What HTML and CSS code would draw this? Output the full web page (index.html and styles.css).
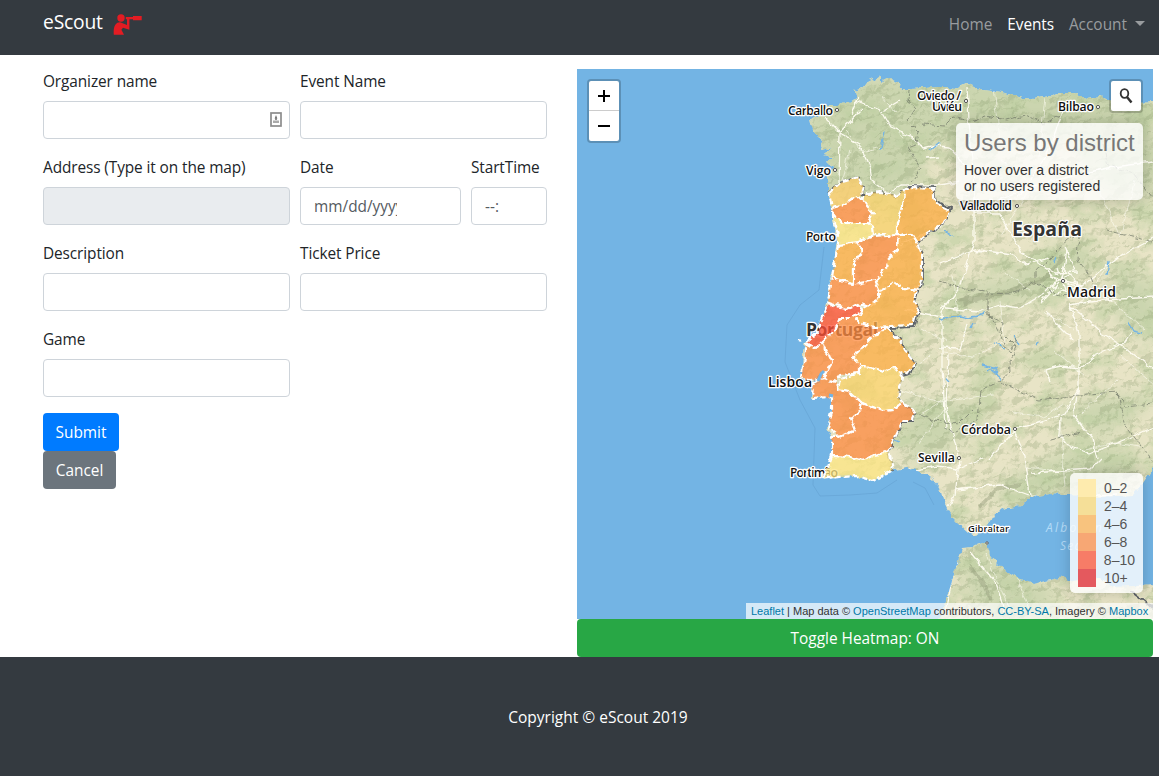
FILE: index.html
```html
<!DOCTYPE html>
<html lang="en">
<head>
<meta charset="utf-8">
<title>eScout</title>
<link rel="stylesheet" href="styles.css">
</head>
<body>
<header class="navbar">
  <a class="brand"><span>eScout</span>
    <svg class="logo" width="32" height="24" viewBox="0 0 32 24"><circle cx="9" cy="5" r="3.7"/><path d="M21 3h8.700v4.200H21V6.200h-3.600V16.800L11 14.700l-1.600 2.100 2.600 5H1.800C1.400 16 2 12 5.400 9.800Q8 8.400 10 10l5 2V6.200h-1.200V4H21z"/></svg>
  </a>
  <nav class="menu"><a>Home</a><a class="active">Events</a><a class="dropdown">Account</a></nav>
</header>
<main class="content">
  <form class="form">
    <div class="row">
      <div class="group"><label>Organizer name</label><div class="input fill">
        <svg width="12" height="15" viewBox="0 0 12 15"><rect x="1" y="1" width="10" height="13" fill="#fff" stroke="#8c8c8c" stroke-width="1.700"/><path d="M6 3l1.400 3.500H4.600zM5.200 6h1.600v2H5.200z" fill="#777"/><path d="M3 8.500h6V11H3z" fill="#aaa"/></svg></div></div>
      <div class="group"><label>Event Name</label><div class="input"></div></div>
    </div>
    <div class="row">
      <div class="group"><label>Address (Type it on the map)</label><div class="input disabled"></div></div>
      <div class="group date"><label>Date</label><div class="input"><span class="clip">mm/dd/yyyy</span></div></div>
      <div class="group time"><label>StartTime</label><div class="input"><span>--:</span></div></div>
    </div>
    <div class="row">
      <div class="group"><label>Description</label><div class="input"></div></div>
      <div class="group"><label>Ticket Price</label><div class="input"></div></div>
    </div>
    <div class="row"><div class="group"><label>Game</label><div class="input"></div></div></div>
    <button type="button" class="btn submit">Submit</button>
    <button type="button" class="btn cancel">Cancel</button>
  </form>
  <section class="map-column">
    <div class="map">
      <svg class="tiles" width="576" height="550" viewBox="577 69 576 550">
        <defs>
          <filter id="coast" filterUnits="userSpaceOnUse" x="770" y="60" width="400" height="570"><feTurbulence type="fractalNoise" baseFrequency=".15" numOctaves="2" seed="4"/><feDisplacementMap in="SourceGraphic" scale="7" xChannelSelector="R" yChannelSelector="G"/></filter>
          <filter id="jagged" filterUnits="userSpaceOnUse" x="770" y="60" width="400" height="570"><feTurbulence type="fractalNoise" baseFrequency=".12" numOctaves="2" seed="9"/><feDisplacementMap in="SourceGraphic" scale="6" xChannelSelector="R" yChannelSelector="G"/></filter>
          <filter id="forest" x="0" y="0" width="100%" height="100%" color-interpolation-filters="sRGB"><feTurbulence type="fractalNoise" baseFrequency=".03 .04" numOctaves="5" seed="11"/><feColorMatrix values="0 0 0 0 .74  0 0 0 0 .81  0 0 0 0 .63  4 0 0 0 -1.900"/></filter>
          <filter id="relief" x="0" y="0" width="100%" height="100%" color-interpolation-filters="sRGB"><feTurbulence type="fractalNoise" baseFrequency=".055 .075" numOctaves="4" seed="8"/><feColorMatrix values="0 0 0 0 0  0 0 0 0 0  0 0 0 0 0  1 0 0 0 0"/><feDiffuseLighting surfaceScale="7" lighting-color="#fff" result="lit"><feDistantLight azimuth="225" elevation="45"/></feDiffuseLighting><feColorMatrix values="0 0 0 0 .52  0 0 0 0 .60  0 0 0 0 .42  -2.200 0 0 0 1.450"/></filter>
          <filter id="soft" x="-30%" y="-30%" width="160%" height="160%"><feGaussianBlur stdDeviation="9"/></filter>
          <path id="iberia" d="M1158 101L1140 102 1120 104 1108 100 1100 96 1087 98 1073 93 1058 93 1050 96 1035 99 1023 98 1000 92 983 90 967 83 957 88 940 87 912 89 902 89 895 80 887 78 881 81 881 75 872 80 866 83 863 87 854 90 855 95 858 98 848 102 840 105 827 105 820 115 810 119 812 128 817 137 825 140 820 150 832 147 823 155 833 157 827 163 835 167 828 175 828 193 832 203 833 220 838 240 835 263 830 283 828 300 823 317 817 333 805 343 803 353 801 377 810 382 822 372 823 380 813 385 812 398 832 395 832 413 828 427 832 437 832 455 828 467 823 478 840 475 857 476 873 481 893 470 907 468 920 472 932 479 940 488 943 500 948 510 955 520 968 532 977 535 985 528 995 513 1007 508 1022 506 1030 497 1050 494 1070 495 1100 497 1133 495 1143 483 1158 460Z"/>
          <path id="africa" d="M937 622L947 597 959 558 962 548 973 547 987 542 990 555 1003 570 1017 578 1033 584 1050 580 1063 577 1073 582 1100 577 1113 587 1158 585V622Z"/>
          <clipPath id="land"><use href="#iberia"/><use href="#africa"/></clipPath>
        </defs>
        <rect x="577" y="69" width="576" height="550" fill="#73b4e4"/>
        <g class="boundary"><path d="M824 247L819 290 800 305 787 325 785 362 800 400 815 428 813 485 820 496 850 495 877 493 897 480M913 482l12 6 9 17"/></g>
        <g filter="url(#coast)">
          <g fill="#e8e4c6"><use href="#iberia"/><use href="#africa"/></g>
          <g clip-path="url(#land)">
            <g fill="#cbd5af" filter="url(#soft)"><path d="M800 75H1153V140L1060 145 990 135 925 150 920 195 820 200Z"/><path d="M925 300L1000 278 1070 240 1100 260 1040 300 980 310ZM1080 130l80 0v70l-60-10zM1110 265l50 20v60l-40-20zM900 400l100 5-45 40-45 20zM980 500l100-60 70 15-40 40zM965 545l100 50-40 30-60-20zM1040 415l70-20 50 0-50 40z"/></g>
            <rect x="780" y="69" width="380" height="550" filter="url(#forest)" opacity=".6"/>
            <g filter="url(#relief)" opacity=".27"><rect x="780" y="69" width="380" height="550"/></g>
          </g>
        </g>
        <path class="mountain" filter="url(#jagged)" d="M957 301l22-5 22-2 25-9 18-5 20-25M963 304l30-9 28-6M980 507l18-19 22-3M970 566l13 17 8 17M1123 476l17-5"/>
        <g clip-path="url(#land)">
          <g filter="url(#jagged)">
            <g class="roads minor">
              <path d="M847 132l15 20 19-5M889 123l15 14M881 96l15 17M850 150l-8 35M1000 160l40 32M1032 185l-30 50M900 390l40 12 55-8M930 355l-15 13M920 415l30-20M953 275l5 38M1000 300l5 42-32 15-30-5M1095 180l25 57M1063 405l-20 12-30-5M1055 351l30 25M1060 422l5 65M1075 330l-30-17M1120 355l35 30M1135 180l-15 57M1010 558l20 55M985 552l25 60M943 410l-25 34M1082 413l35-33M1085 450l30-7 25 4M1030 290l-25-17M946 342l-25-14M1110 300l35 30M1000 140l-6-52M1045 97l-6 60M1025 467l50 6M1108 265l-30 42"/>
            </g>
            <g class="roads">
              <path d="M825 118l15 15 19 11 11 24 2 13 15 12M856 100l24 10 10 17 21 9 12 13 13-3 13 1 18 20M861 110l-21 22-1 50M858 98l-6 16M891 191l10-6 40 0 19-4M880 112l20-12M926 158l14-1M967 88l2 32 5 65 0 57-14 45-18 24 0 57 4 60"/>
              <path d="M940 264l35-14 5 1M979 250l34 5 13 10 22-7M974 213l25 0 23 40 16 10 20 12M974 210l35-14 38-14 60-14 45-6M1065 105l-18 50-30 45M1067 250l-5 30 20 5 40-31 31-16M940 307l38 5 22-7 20 3 25-15M1069 303l10 30 0 55-6 25M1069 306l20 15 12 12 25 15 28 22M1079 388l-15 26-22 8-27 7-26 30M1047 310l8 12 18 18M1050 382l-5-12 15-4 21 2 15-13 28-12 8-12M1069 305l35-5 50-3M983 458l-25 11-20-3-30 5M959 459l-13-53 2-52M959 460l-4 35-8 12M955 490l45-5 28 10M1014 430l11 26 5 40 34 2 53-3M1031 473l60-4 10-10M1060 418l-1 17 8 10 22 9 30-12 34-15M1073 414l20 25 5 20M940 348l20 1 7-25M960 550l-15 60M970 552l25 30 10 30"/>
              <path d="M905 310l38 7M900 244l43-18M1056 273l22-1M1046 269l10 12-10 11M1062 266l15 17-7 10-20-8M1075 271l-10-25M1040 302l19-20M1061 281l30 10M1052 295l13-5M1050 276l25 10M1058 268l8 24M1052 283l20-8"/>
            </g>
            <path class="water" d="M880 150l5-18M930 150l10-8M940 320l20-4 8 2 18-4M971 329l3-6M994 344l12 4M982 365l12 3 4 8M987 372l10-4M1107 275l2-14M1128 321l6 10 8 2M992 371l10 8M944 231l9 5M945 378l4 4M1053 262l2-5M900 442l-5-2M1015 337l4 8M1036 345l3-3"/>
            <path class="province" d="M909 90l-1 10 8 9-8 12 10 10-2 13-8 3 11 18 3 3-10 14M922 124l22 2 10-10 17 5 15-5 20 4 20-5 18 10 18-11M940 281l14 5 9 3 25 2 0 20 22 42 7-14M990 293l20 1 25-12 25 14 28-2M1035 285v-15l10-5 22-26 12-5-2 25 12 15 4 10M988 305l0 10 15 7-2 10 15 15-7 15 1 10-9 8-20 10-3 30-24 12-11-6M1001 382l37 18 50-6 30-2 7 15 28-3M1118 392l5 30 30 40M1050 440l30-8M1103 145l5 20 25 8 20 25M914 412l20 9 25 3 15-15M1105 230l48 12"/>
          </g>
        </g>
        <path class="frontier" filter="url(#jagged)" d="M828 193l12-10 18-6 5 10-2 7 6 0 14-2 14 4 9-6 6-4 23 1 3 14 15 7-8 16-16 10-9 10 5 10 0 26-4 10-5 11 5 8-5 18-24 1 11 13 5 10 10 12-7 11-8 2 -3 22 5 6 12 9-2 8-10 0-11 23-4 9 5 18M1130 590l12 9 11 10"/>
        <g class="place under"><text x="788" y="115" textLength="45">Carballo</text><text x="917" y="100" textLength="44">Oviedo /</text><text x="932" y="111" textLength="30">Uviéu</text><text x="806" y="175" textLength="25">Vigo</text><text x="806" y="241" textLength="30">Porto</text><text class="lisboa" x="768" y="387" textLength="44">Lisboa</text><text x="790" y="477" textLength="48">Portimão</text><text class="country" x="806" y="336" textLength="72">Portugal</text></g>
        <g class="districts" filter="url(#jagged)">
          <path fill="#fdce69" d="M829 193L840 183 858 177 863 185 860 197 853 198 843 205 832 208Z"/>
          <path fill="#fd8a3c" d="M832 208L843 205 853 198 860 197 868 207 874 213 868 223 853 223 842 223 833 212Z"/>
          <path fill="#fad26a" d="M867 193L880 192 895 195 904 190 903 207 897 223 897 237 883 234 873 235 872 227 868 223 874 213 868 207 862 199Z"/>
          <path fill="#feac40" d="M904 190L910 187 933 188 935 203 950 210 943 223 927 233 923 237 918 244 913 235 897 234 897 223 903 207Z"/>
          <path fill="#fee681" d="M833 212L842 223 868 223 872 227 873 235 858 242 838 245 838 235 833 220Z"/>
          <path fill="#feac40" d="M838 245L858 242 863 250 854 262 854 283 843 282 832 277 835 260Z"/>
          <path fill="#fd8a3c" d="M858 242L873 237 898 235 897 250 888 260 887 268 875 280 854 285 854 262 863 250Z"/>
          <path fill="#feac40" d="M898 235L913 235 918 244 922 253 922 280 918 290 903 288 895 282 880 291 875 280 887 268 888 260 897 250Z"/>
          <path fill="#fd8a3c" d="M832 277L843 282 854 284 875 280 880 291 880 298 870 307 860 303 847 309 828 302Z"/>
          <path fill="#feac40" d="M880 291L895 282 903 288 918 290 913 300 918 307 913 325 890 326 873 327 860 323 857 318 863 308 880 298Z"/>
          <path fill="#ff4c32" d="M829 303L835 307 847 309 860 304 862 310 852 318 840 318 835 330 822 342 815 348 805 343 817 333 823 317Z"/>
          <path fill="#fd8a3c" d="M862 310L857 320 860 323 873 327 887 327 872 338 853 358 860 365 860 373 840 375 835 382 823 378 832 360 825 350 822 342 835 330 840 318 852 318Z"/>
          <path fill="#feac40" d="M887 327L900 340 905 350 915 362 908 373 900 375 895 368 883 372 860 365 853 358 872 338Z"/>
          <path fill="#fdd46b" d="M860 365L883 372 895 368 902 377 898 397 903 403 893 410 883 411 862 403 852 393 838 390 840 379 860 373Z"/>
          <path fill="#fd8a3c" d="M805 343L815 348 822 342 825 350 832 360 823 378 812 380 801 377 805 357Z"/>
          <path fill="#fd8a3c" d="M813 383L823 378 835 382 838 390 852 393 862 403 860 410 850 418 855 430 840 437 828 427 832 413 832 397 812 398Z"/>
          <path fill="#fd8a3c" d="M862 403L883 411 893 410 903 403 915 412 913 420 903 420 892 443 888 452 875 455 863 461 850 457 832 456 832 437 840 437 855 430 850 418 860 410Z"/>
          <path fill="#fee681" d="M832 456L850 457 863 461 875 455 889 451 893 470 873 481 857 476 823 478 828 467Z"/>
          <path d="M799 340l2 1"/>
        </g>
        <path class="estuary" d="M818 381l3-7 3-3M829 395l4 1"/>
        <g class="place"><text x="1058" y="111" textLength="36">Bilbao</text><text x="960" y="210" textLength="52">Valladolid</text><text x="961" y="434" textLength="50">Córdoba</text><text x="918" y="462" textLength="37">Sevilla</text><text class="lisboa" x="1067" y="297" textLength="49">Madrid</text><text class="country spain" x="1012" y="236" textLength="70">España</text><text class="small" x="968" y="532" textLength="41">Gibraltar</text></g>
        <g class="sea"><text x="1046" y="532" textLength="57">Alboran</text><text x="1060" y="550">Sea</text></g>
        <g class="dots"><circle cx="837" cy="110" r="1.600"/><circle cx="966" cy="101" r="1.600"/><circle cx="835" cy="170" r="1.600"/><circle cx="1098" cy="107" r="1.600"/><circle cx="1017" cy="206" r="1.600"/><circle cx="1063" cy="281" r="1.600"/><circle cx="1015" cy="429" r="1.600"/><circle cx="959" cy="458" r="1.600"/><circle cx="987" cy="543" r="1.200"/></g>
      </svg>
      <div class="zoom"><div><svg width="14" height="14"><path d="M1 7h12M7 1v12"/></svg></div><div><svg width="14" height="14"><path d="M1 7h12"/></svg></div></div>
      <div class="search"><svg width="16" height="18" viewBox="0 0 16 18"><ellipse cx="6.500" cy="6.500" rx="3.800" ry="4.300" fill="none" stroke="#333" stroke-width="1.800"/><path d="M9 10l4.500 5.500" stroke="#333" stroke-width="2.500"/></svg></div>
      <div class="info"><h4>Users by district</h4>Hover over a district<br>or no users registered</div>
      <div class="legend">
        <div><i class="c0"></i>0–2</div><div><i class="c1"></i>2–4</div><div><i class="c2"></i>4–6</div><div><i class="c3"></i>6–8</div><div><i class="c4"></i>8–10</div><div><i class="c5"></i>10+</div>
      </div>
      <div class="attribution"><a>Leaflet</a> | Map data © <a>OpenStreetMap</a> contributors, <a>CC-BY-SA</a>, Imagery © <a>Mapbox</a></div>
    </div>
    <button type="button" class="btn toggle">Toggle Heatmap: ON</button>
  </section>
</main>
<footer class="footer">Copyright © eScout 2019</footer>
</body>
</html>
```
FILE: styles.css
```css
* { box-sizing: border-box; }
body { margin: 0; width: 1159px; height: 776px; overflow: hidden; display: flex; flex-direction: column; font: 15.4px/24px "Open Sans", "Noto Sans", sans-serif; color: #212529; background: #fff; }
.navbar { height: 55px; flex: none; background: #343a40; display: flex; justify-content: space-between; padding: 0 14px 0 43px; }
.brand { display: flex; color: #fff; font-size: 19.3px; padding-top: 10px; }
.brand span { width: 69px; letter-spacing: -.2px; }
.logo { fill: #e31c23; margin-top: 3px; }
.menu { display: flex; gap: 15px; padding-top: 13px; color: #999c9f; }
.menu .active { color: #fff; letter-spacing: -.1px; }
.dropdown::after { content: ""; display: inline-block; margin-left: 8px; vertical-align: 4px; border: 5px solid transparent; border-top-color: currentColor; border-bottom: 0; }
.content { display: flex; height: 602px; flex: none; padding: 14px 6px 0 43px; gap: 30px; }
.form { width: 504px; }
.row { display: flex; gap: 10px; margin-bottom: 16px; }
.group { width: 247px; }
.date { width: 161px; }
.time { width: 76px; }
label { display: block; padding-top: 1px; margin-bottom: 7px; white-space: nowrap; letter-spacing: -.1px; }
.input { height: 38px; border: 1px solid #ced4da; border-radius: 4px; background: #fff; padding: 7px 13px 5px; color: #555b61; }
.disabled { background: #e9ecef; }
.fill { display: flex; align-items: center; justify-content: flex-end; padding: 0 7px 1px 0; }
.clip { display: block; width: 83px; overflow: hidden; white-space: nowrap; }
.btn { display: block; height: 38px; border: 0; border-radius: 4px; color: #fff; font: inherit; padding: 2px 0 0; text-align: center; }
.submit { width: 76px; background: #007bff; }
.cancel { width: 73px; background: #6c757d; }
.map-column { width: 576px; }
.toggle { width: 576px; background: #28a745; }
.map { position: relative; height: 550px; overflow: hidden; font-family: "Liberation Sans", Arial, sans-serif; }
.tiles { display: block; }
.roads { fill: none; stroke: #fffdf3; stroke-width: 1.3; stroke-linejoin: round; opacity: .95; }
.minor { stroke-width: .9; opacity: .65; }
.boundary { fill: none; stroke: #629fd0; stroke-width: .8; opacity: .7; }
.water { fill: none; stroke: #73b4e4; stroke-width: 1.3; }
.estuary { fill: none; stroke: #73b4e4; stroke-width: 3; }
.mountain { fill: none; stroke: #88906f; stroke-width: 4; opacity: .35; }
.province { fill: none; stroke: #79806f; stroke-width: .9; stroke-dasharray: 6 2; opacity: .85; }
.frontier { fill: none; stroke: #60656a; stroke-width: 2; }
.districts { fill-opacity: .75; stroke: #fff; stroke-width: 2.2; stroke-dasharray: 6 3; stroke-linejoin: round; }
.place { font: 600 12.3px "Open Sans", "Noto Sans", sans-serif; fill: #111; stroke: #fff; stroke-width: 2.5px; stroke-linejoin: round; paint-order: stroke; }
.place .lisboa { font-size: 14px; }
.place .country { font-size: 17.5px; font-weight: 700; fill: #333; }
.place .spain { font-size: 19.5px; }
.place .small { font-size: 9.5px; }
.sea { font: italic 12px "Open Sans", sans-serif; fill: #b5dcf8; letter-spacing: 1.3px; }
.dots { fill: #fff; stroke: #555; stroke-width: 1; }
.zoom { position: absolute; left: 10px; top: 10px; width: 34px; border: 2px solid rgba(0,0,0,.2); border-radius: 4px; background: #fff padding-box; }
.zoom div { height: 30px; display: grid; place-items: center; }
.zoom div:first-child { border-bottom: 1px solid #ccc; }
.zoom path { stroke: #000; stroke-width: 2; }
.search { position: absolute; right: 10px; top: 10px; width: 34px; height: 34px; border: 2px solid rgba(0,0,0,.2); border-radius: 4px; background: #fff padding-box; display: grid; place-items: center; }
.info { position: absolute; left: 379px; top: 54px; width: 187px; height: 77px; padding: 6px 8px; border-radius: 5px; background: rgba(255,255,255,.8); box-shadow: 0 0 15px rgba(0,0,0,.2); font-size: 14px; line-height: 16px; color: #333; white-space: nowrap; }
.info h4 { margin: 0 0 5px; font-size: 24px; line-height: 28px; font-weight: 400; color: #777; }
.legend { position: absolute; left: 493px; top: 404px; width: 73px; height: 120px; padding: 6px 8px; border-radius: 5px; background: rgba(255,255,255,.8); box-shadow: 0 0 15px rgba(0,0,0,.2); font-size: 14px; line-height: 18px; color: #555; }
.legend div { display: flex; gap: 8px; white-space: nowrap; }
.legend i { width: 18px; height: 18px; }
.c0 { background: #feebae; } .c1 { background: #f5df98; } .c2 { background: #f8c37e; } .c3 { background: #f7a774; } .c4 { background: #f77c67; } .c5 { background: #e4595e; }
.attribution { position: absolute; right: 0; bottom: 0; height: 16px; width: 407px; padding: 0 5px; font-size: 11px; line-height: 16px; background: rgba(255,255,255,.7); color: #333; white-space: nowrap; }
.attribution a { color: #0078a8; }
.footer { flex: 1; background: #343a40; color: #fff; text-align: center; padding: 48px 0 0 37px; font-size: 15.5px; }
```
